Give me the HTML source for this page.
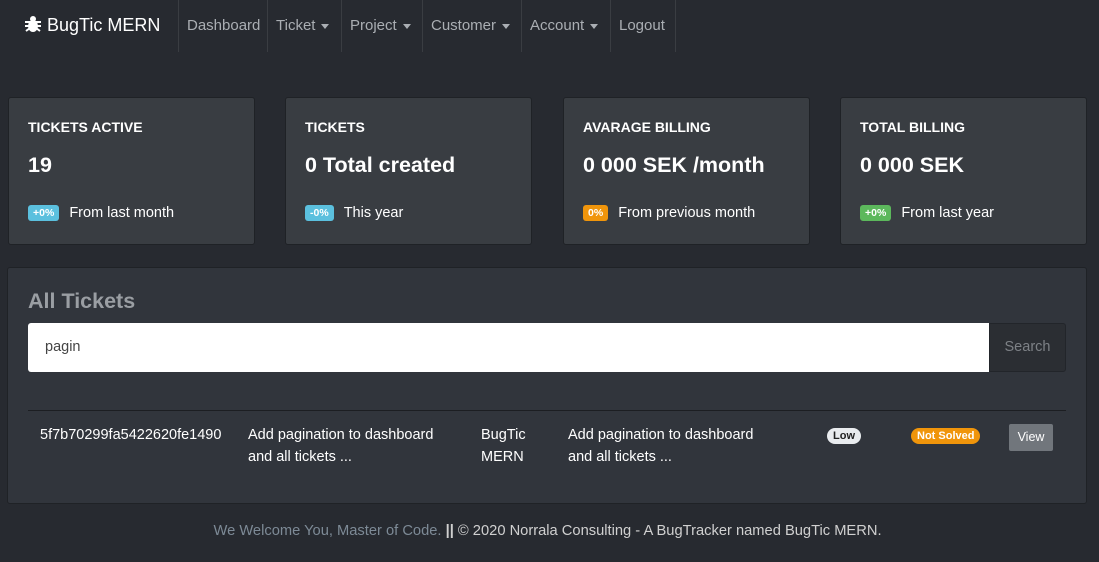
<!DOCTYPE html>
<html><head><style>
*{box-sizing:border-box;margin:0;padding:0}
body{width:1099px;height:562px;background:#272a30;font-family:"Liberation Sans",sans-serif;color:#fff;position:relative;overflow:hidden}
.a{position:absolute}
.nav{top:0;left:0;height:52px;width:1099px}
.brand{left:24px;top:15px;font-size:18px;color:#fff}
.ni{top:0;height:52px;line-height:52px;font-size:15px;color:#aaaeb3;border-left:1px solid #3a3d42;padding:0 8px}
.car{display:inline-block;border-top:5px solid #aaaeb3;border-left:4px solid transparent;border-right:4px solid transparent;margin-left:6px;vertical-align:middle}
.card{top:97px;width:247px;height:148px;background:#393d42;border:1px solid #1f2226;border-radius:3px}
.card .t{position:absolute;left:19px;top:21px;font-size:14px;font-weight:bold}
.card .v{position:absolute;left:19px;top:55px;font-size:21.5px;font-weight:bold}
.card .f{position:absolute;left:19px;top:107px;font-size:14.5px}
.b{display:inline-block;font-size:10.5px;font-weight:bold;padding:2px 5px;border-radius:3px;margin-right:10px;vertical-align:1px}
.td{font-size:14.5px;line-height:22px}
</style></head><body>
<div class="a nav"></div>
<div class="a brand"><svg width="18" height="18" viewBox="0 0 18 18" style="vertical-align:-2px"><circle cx="9" cy="4" r="3" fill="#fff"/><ellipse cx="9" cy="11" rx="5" ry="6" fill="#fff"/><path d="M1 7h16M1 11h16M2 16l4-3M16 16l-4-3" stroke="#fff" stroke-width="2"/></svg> BugTic MERN</div>
<div class="a ni" style="left:178px">Dashboard</div>
<div class="a ni" style="left:267px">Ticket<span class="car"></span></div>
<div class="a ni" style="left:341px">Project<span class="car"></span></div>
<div class="a ni" style="left:422px">Customer<span class="car"></span></div>
<div class="a ni" style="left:521px">Account<span class="car"></span></div>
<div class="a ni" style="left:610px;width:66px;border-right:1px solid #3a3d42">Logout</div>

<div class="a card" style="left:8px"><div class="t">TICKETS ACTIVE</div><div class="v">19</div><div class="f"><span class="b" style="background:#5bc0de">+0%</span>From last month</div></div>
<div class="a card" style="left:285px"><div class="t">TICKETS</div><div class="v">0 Total created</div><div class="f"><span class="b" style="background:#5bc0de">-0%</span>This year</div></div>
<div class="a card" style="left:563px"><div class="t">AVARAGE BILLING</div><div class="v">0 000 SEK /month</div><div class="f"><span class="b" style="background:#f0950b">0%</span>From previous month</div></div>
<div class="a card" style="left:840px"><div class="t">TOTAL BILLING</div><div class="v">0 000 SEK</div><div class="f"><span class="b" style="background:#5cb85c">+0%</span>From last year</div></div>

<div class="a" style="left:7px;top:267px;width:1080px;height:237px;background:#31353c;border:1px solid #1f2226;border-radius:3px"></div>
<div class="a" style="left:28px;top:289px;font-size:21.5px;font-weight:bold;color:#9a9ea3">All Tickets</div>
<div class="a" style="left:28px;top:323px;width:961px;height:49px;background:#fff;border-radius:3px 0 0 3px;color:#444;font-size:14.5px;line-height:49px;padding-left:17px">pagin</div>
<div class="a" style="left:989px;top:323px;width:77px;height:49px;background:#2b2e33;border:1px solid #22252a;border-radius:0 3px 3px 0;color:#7d8186;font-size:14.5px;line-height:47px;text-align:center">Search</div>
<div class="a" style="left:28px;top:410px;width:1038px;height:1px;background:#1c1e22"></div>
<div class="a td" style="left:40px;top:424px">5f7b70299fa5422620fe1490</div>
<div class="a td" style="left:248px;top:424px">Add pagination to dashboard<br>and all tickets ...</div>
<div class="a td" style="left:481px;top:424px">BugTic<br>MERN</div>
<div class="a td" style="left:568px;top:424px">Add pagination to dashboard<br>and all tickets ...</div>
<div class="a" style="left:827px;top:428px;background:#e9ecef;color:#222;font-size:11px;font-weight:bold;padding:2px 6px;border-radius:8px">Low</div>
<div class="a" style="left:911px;top:428px;background:#f0950b;color:#fff;font-size:11px;font-weight:bold;padding:2px 6px;border-radius:8px">Not Solved</div>
<div class="a" style="left:1009px;top:424px;width:44px;height:27px;background:#71767c;border-radius:2px;font-size:12.5px;line-height:27px;text-align:center">View</div>
<div class="a" style="left:0;top:523px;width:1099px;text-align:center;font-size:14.7px;color:#d0d0d0;padding-right:4px"><span style="color:#7d8a96">We Welcome You, Master of Code.</span> <b>||</b> © 2020 Norrala Consulting - A BugTracker named BugTic MERN.</div>
</body></html>
